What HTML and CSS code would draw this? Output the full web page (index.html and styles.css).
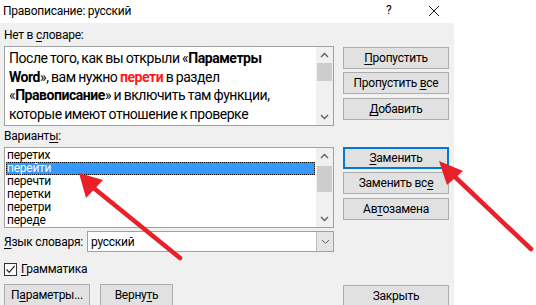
FILE: index.html
```html
<!DOCTYPE html>
<html lang="ru">
<head>
<meta charset="utf-8">
<link rel="stylesheet" href="styles.css">
</head>
<body>
<div class="dialog">
  <div class="titlebar">
    <span class="title">Правописание: русский</span>
    <span class="help">?</span>
    <svg class="close" width="12" height="12" viewBox="0 0 12 12"><path d="M1 1L11 11M11 1L1 11" stroke="#222" stroke-width="1" fill="none"/></svg>
  </div>
  <div class="main">
    <div class="left">
      <div class="label lbl1">Нет в <u>с</u>ловаре:</div>
      <div class="textbox">
        <div class="tb-text">После того, как вы открыли «<b>Параметры</b><br><b>Word</b>», вам нужно <b class="red">перети</b> в раздел<br>«<b>Правописание</b>» и включить там функции,<br>которые имеют отношение к проверке<br>орфографии. В</div>
        <div class="scroll">
          <svg class="arr" width="9" height="6" viewBox="0 0 9 6"><path d="M1 5L4.5 1.5L8 5" stroke="#606060" stroke-width="1.4" fill="none"/></svg>
          <div class="track"><div class="thumb thumb1"></div></div>
          <svg class="arr" width="9" height="6" viewBox="0 0 9 6"><path d="M1 1L4.5 4.5L8 1" stroke="#606060" stroke-width="1.4" fill="none"/></svg>
        </div>
      </div>
      <div class="label lbl2">Вариант<u>ы</u>:</div>
      <div class="listbox">
        <ul class="items">
          <li>перетих</li>
          <li class="sel">перейти</li>
          <li>перечти</li>
          <li>перетки</li>
          <li>перетри</li>
          <li>переде</li>
        </ul>
        <div class="scroll">
          <svg class="arr" width="9" height="6" viewBox="0 0 9 6"><path d="M1 5L4.5 1.5L8 5" stroke="#606060" stroke-width="1.4" fill="none"/></svg>
          <div class="track"><div class="thumb thumb2"></div></div>
          <svg class="arr" width="9" height="6" viewBox="0 0 9 6"><path d="M1 1L4.5 4.5L8 1" stroke="#606060" stroke-width="1.4" fill="none"/></svg>
        </div>
      </div>
      <div class="langrow">
        <span class="langlabel"><u>Я</u>зык словаря:</span>
        <div class="combo">
          <span class="combo-text">русский</span>
          <div class="dropbtn"><svg width="9" height="6" viewBox="0 0 9 6"><path d="M1 1L4.5 4.5L8 1" stroke="#606060" stroke-width="1" fill="none"/></svg></div>
        </div>
      </div>
      <div class="checkrow">
        <span class="checkbox"><svg width="11" height="11" viewBox="0 0 11 11"><path d="M1.5 5.5L4.2 8.3L9.7 1.8" stroke="#222" stroke-width="1.2" fill="none"/></svg></span>
        <span class="checklabel"><u>Г</u>рамматика</span>
      </div>
      <div class="bottombtns">
        <div class="btn btn-params"><span>П<u>а</u>раметры...</span></div>
        <div class="btn btn-back"><span>Верну<u>т</u>ь</span></div>
      </div>
    </div>
    <div class="right">
      <div class="btn rb first"><span><u>П</u>ропустить</span></div>
      <div class="btn rb"><span>Пропустить <u>в</u>се</span></div>
      <div class="btn rb third"><span><u>Д</u>обавить</span></div>
      <div class="btn rb focused group2"><span><u>З</u>аменить</span></div>
      <div class="btn rb"><span>Заменить вс<u>е</u></span></div>
      <div class="btn rb third"><span>Ав<u>т</u>озамена</span></div>
      <div class="btn rb close-btn"><span>Закрыть</span></div>
    </div>
  </div>
</div>
<svg class="arrows" width="536" height="305" viewBox="0 0 536 305">
  <line x1="180" y1="258" x2="90" y2="185" stroke="#e8202a" stroke-width="4.5" stroke-linecap="round"/>
  <polygon points="79,173 86,198 103,180" fill="#e8202a"/>
  <line x1="531" y1="249" x2="452" y2="174" stroke="#e8202a" stroke-width="4.5" stroke-linecap="round"/>
  <polygon points="439,161 447,185 463,171" fill="#e8202a"/>
</svg>
</body>
</html>
```

FILE: styles.css
```css
html, body {
  margin: 0;
  padding: 0;
  background: #ffffff;
}
body {
  width: 536px;
  height: 305px;
  overflow: hidden;
  position: relative;
  font-family: Roboto, "Noto Sans", sans-serif;
  font-size: 12px;
  letter-spacing: -0.25px;
  color: #000;
}
u { text-decoration: underline; text-underline-offset: 2px; }
.dialog {
  width: 454px;
  height: 305px;
  background: #f0f0f0;
}
.titlebar {
  height: 23px;
  background: #ffffff;
  display: flex;
  align-items: center;
  position: relative;
}
.title {
  margin-left: 3px;
  font-size: 12px;
  margin-top: -2px;
}
.help {
  position: absolute;
  left: 386px;
  top: 3px;
  font-size: 12px;
}
.close {
  position: absolute;
  left: 428px;
  top: 5px;
}
.main {
  display: grid;
  grid-template-columns: 330px 106px;
  column-gap: 9px;
  padding-left: 4px;
}
.left {
  display: flex;
  flex-direction: column;
}
.label {
  line-height: 14px;
}
.lbl1 { height: 23px; padding-top: 5px; box-sizing: border-box; }
.lbl2 { height: 21px; padding-top: 3px; box-sizing: border-box; }
.textbox {
  height: 80px;
  box-sizing: border-box;
  border: 1px solid #a0a0a0;
  background: #fff;
  display: flex;
  overflow: hidden;
}
.tb-text {
  flex: 1;
  font-size: 14px;
  line-height: 18.5px;
  padding: 2px 0 0 4px;
  white-space: nowrap;
  overflow: hidden;
  color: #000;
  letter-spacing: -0.45px;
  word-spacing: -0.5px;
}
.tb-text b { font-weight: 700; }
.tb-text .red { color: #ff1a1a; }
.scroll {
  width: 17px;
  background: #f0f0f0;
  display: flex;
  flex-direction: column;
  align-items: center;
}
.arr { margin: 5px 0; flex: none; }
.track {
  flex: 1;
  width: 100%;
  position: relative;
}
.thumb {
  position: absolute;
  left: 1px;
  right: 1px;
  background: #cdcdcd;
}
.thumb1 { top: 0; height: 18px; }
.thumb2 { top: 2px; height: 26px; }
.listbox {
  height: 81px;
  box-sizing: border-box;
  border: 1px solid #a0a0a0;
  background: #fff;
  display: flex;
}
.items {
  flex: 1;
  list-style: none;
  margin: 0;
  padding: 1px 1px 0 1px;
  overflow: hidden;
}
.items li {
  height: 13px;
  line-height: 13px;
  padding-left: 1px;
  font-size: 12px;
  box-sizing: border-box;
}
.items li.sel {
  background: #3399ff;
  color: #fff;
  outline: 1px dotted #000;
  outline-offset: -1px;
}
.langrow {
  margin-top: 3px;
  height: 21px;
  display: flex;
  align-items: center;
}
.langlabel {
  width: 83px;
  flex: none;
}
.combo {
  flex: 1;
  height: 21px;
  box-sizing: border-box;
  border: 1px solid #a0a0a0;
  background: #fff;
  display: flex;
  align-items: center;
}
.combo-text {
  flex: 1;
  padding-left: 3px;
}
.dropbtn {
  width: 16px;
  height: 19px;
  background: #e5e5e5;
  border-left: 1px solid #c0c0c0;
  display: flex;
  align-items: center;
  justify-content: center;
}
.checkrow {
  margin-top: 10px;
  height: 14px;
  display: flex;
  align-items: center;
}
.checkbox {
  width: 13px;
  height: 13px;
  box-sizing: border-box;
  border: 1px solid #333;
  background: #fff;
  display: flex;
  align-items: center;
  justify-content: center;
}
.checklabel {
  margin-left: 4px;
}
.bottombtns {
  margin-top: 8px;
  display: flex;
  gap: 10px;
}
.btn {
  height: 22px;
  box-sizing: border-box;
  border: 1px solid #adadad;
  background: #e1e1e1;
  display: flex;
  align-items: center;
  justify-content: center;
  font-size: 12px;
  line-height: 14px;
}
.btn-params { width: 86px; }
.btn-back { width: 73px; }
.right {
  display: flex;
  flex-direction: column;
}
.rb { margin-top: 3px; }
.rb.first { margin-top: 24px; }
.rb.third { margin-top: 4px; }
.rb.group2 { margin-top: 27px; }
.rb.focused { border: 2px solid #0078d7; }
.rb.close-btn { margin-top: 65px; }
.arrows {
  position: absolute;
  left: 0;
  top: 0;
  pointer-events: none;
}
```
